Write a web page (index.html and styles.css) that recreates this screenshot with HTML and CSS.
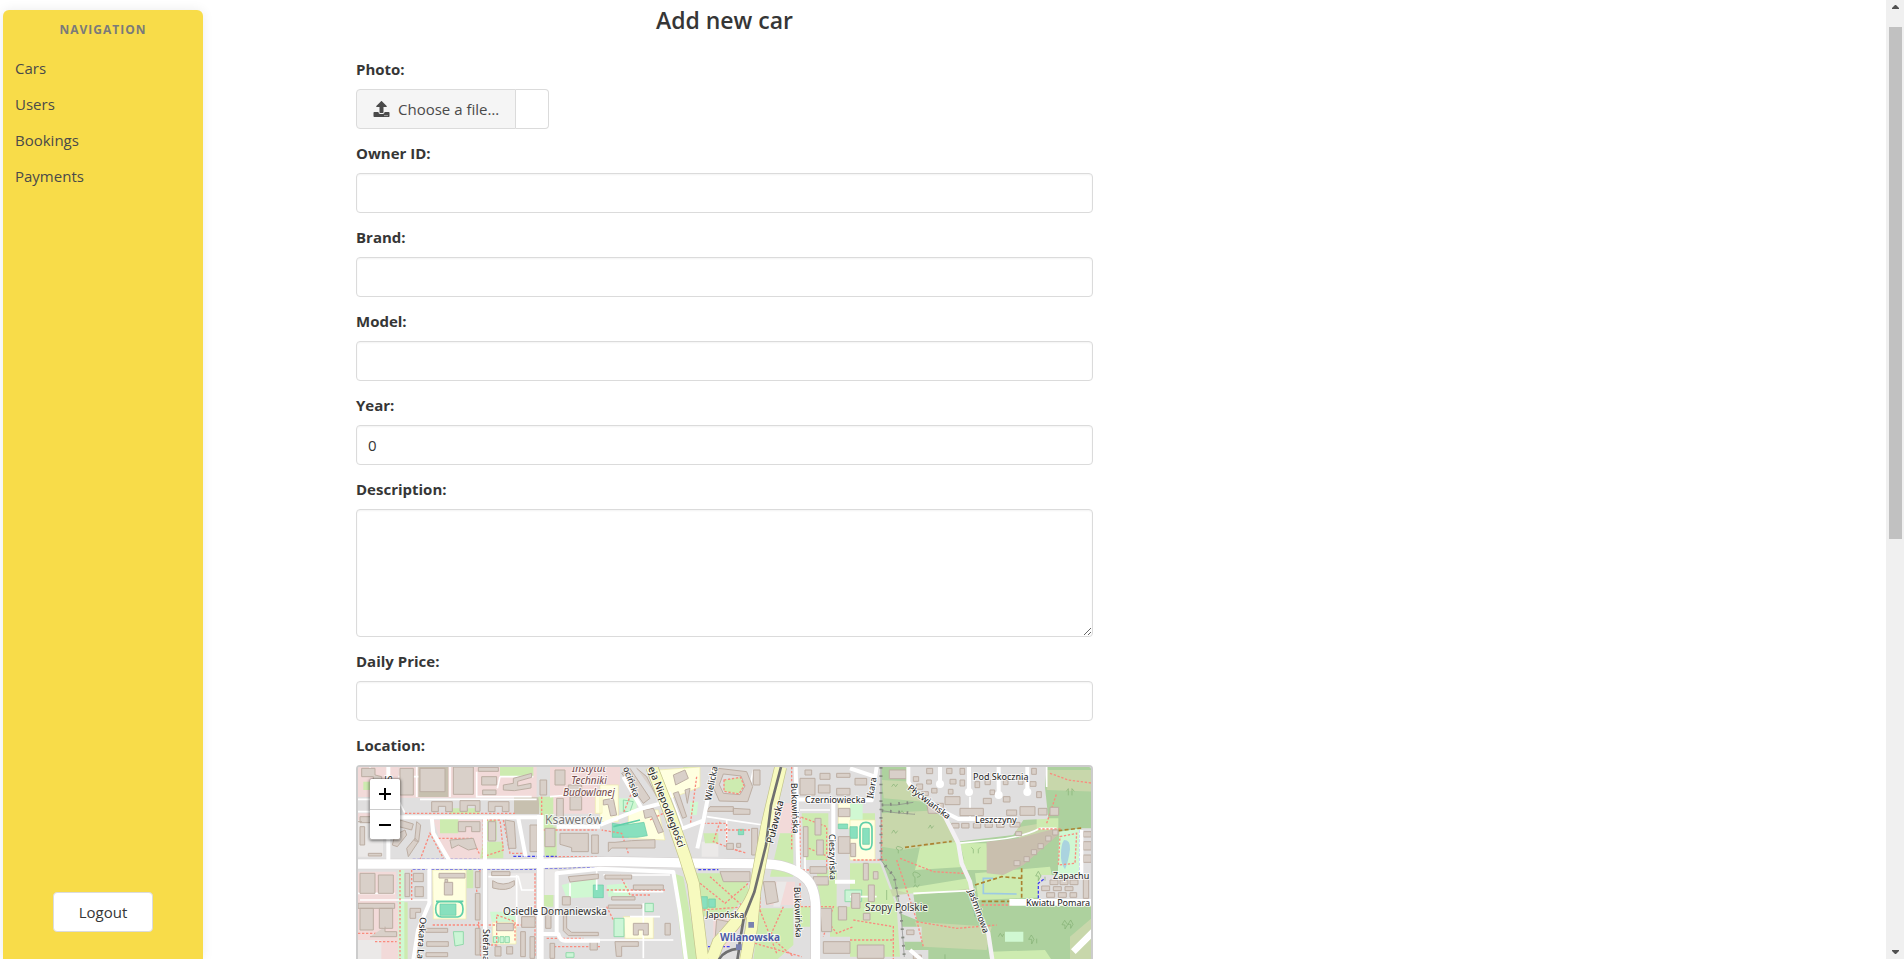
FILE: index.html
```html
<!DOCTYPE html>
<html lang="en">
<head>
<meta charset="utf-8">
<title>Add new car</title>
<link rel="stylesheet" href="styles.css">
</head>
<body>
<div class="app">
  <aside class="sidebar">
    <p class="menu-label">NAVIGATION</p>
    <nav class="menu">
      <a href="#cars">Cars</a>
      <a href="#users">Users</a>
      <a href="#bookings">Bookings</a>
      <a href="#payments">Payments</a>
    </nav>
    <button class="logout" type="button">Logout</button>
  </aside>

  <main class="content">
    <form class="car-form">
      <h1 class="title">Add new car</h1>
      <div class="field">
        <label class="label" for="photo">Photo:</label>
        <label class="file">
          <input class="file-input" id="photo" type="file">
          <span class="file-cta">
            <svg class="file-icon" viewBox="0 0 512 512" aria-hidden="true"><path d="M296 384h-80c-13.300 0-24-10.700-24-24V192h-87.700c-17.800 0-26.700-21.500-14.100-34.100L242.300 5.700c7.500-7.500 19.800-7.500 27.300 0l152.200 152.200c12.600 12.600 3.700 34.100-14.100 34.100H320v168c0 13.300-10.700 24-24 24zm216-8v112c0 13.300-10.700 24-24 24H24c-13.300 0-24-10.700-24-24V376c0-13.300 10.700-24 24-24h136v8c0 30.900 25.100 56 56 56h80c30.900 0 56-25.100 56-56v-8h136c13.300 0 24 10.700 24 24zm-124 88c0-11-9-20-20-20s-20 9-20 20 9 20 20 20 20-9 20-20zm64 0c0-11-9-20-20-20s-20 9-20 20 9 20 20 20 20-9 20-20z"/></svg>
            <span>Choose a file…</span>
          </span>
          <span class="file-name"></span>
        </label>
      </div>
      <div class="field">
        <label class="label" for="owner">Owner ID:</label>
        <input class="input" id="owner" type="text">
      </div>
      <div class="field">
        <label class="label" for="brand">Brand:</label>
        <input class="input" id="brand" type="text">
      </div>
      <div class="field">
        <label class="label" for="model">Model:</label>
        <input class="input" id="model" type="text">
      </div>
      <div class="field">
        <label class="label" for="year">Year:</label>
        <input class="input" id="year" type="text" inputmode="numeric" value="0">
      </div>
      <div class="field">
        <label class="label" for="description">Description:</label>
        <textarea class="input textarea" id="description"></textarea>
      </div>
      <div class="field">
        <label class="label" for="price">Daily Price:</label>
        <input class="input" id="price" type="text">
      </div>
      <div class="field">
        <p class="label">Location:</p>
        <div class="map">
          <svg class="map-tiles" viewBox="0 0 733 398" preserveAspectRatio="xMinYMin slice" role="img" aria-label="Map of Wilanowska">
            <g transform="scale(.33333) translate(-24 -21)">
              <!-- land use -->
              <path class="retail" d="M24 21h120v90H24zM145 21h415v92H145zM24 160h80v60H24zM24 335h115v95H24zM24 430h130v170H24zM250 180h145v120H290zM600 21h145v140H600zM750 21h60v55h-60zM1280 130h45v90h-60zM1245 365h90v70h-90zM1090 475h100l-60 90h-40z"/>
              <path class="land-light" d="M24 180h75v110H24zM24 540h70v60H24zM415 340h140v160H415zM585 330h40v75h-40zM1055 245h50v45h-50zM1280 365h30l-20 75h-20z"/>
              <path class="brown" d="M205 21h90v90h-90zM492 112h75v50h-75z"/>
              <path class="grass" d="M300 145h90v16h-90zM270 175h55v45h-55zM400 245h60v50h-70zM450 21h100v28H450zM565 110h45v100h-35zM580 200h40v90h-35zM410 180h30v60h-30zM350 325h20v60h-20zM582 405h28v35h-28zM148 427h25v170h-25zM40 65h60v25H40zM1000 21h50v60l-60 10zM1060 220h45v30h-40zM1290 220h40v130h-70zM1355 160h80v140h-70zM1030 340h150l20 60-60 60-90 10zM1230 445h100v110l-50 45h-70zM970 340l30 10 45 250h-45zM1400 330h60v120h-50zM1340 440h40v60h-40zM1440 440h60v90h-60z"/>
              <path class="park" d="M145 330h18v270h-18zM635 375l100-25 15 60-100 5zM1020 125h25l-5 40h-20zM770 375l60-5 15 40h-70zM420 455h70l10 30h-75zM805 115h55v40h-50z"/>
              <path class="school" d="M248 330h100v147h-98zM428 487h70v65h-70zM736 100h20v60h-20zM750 75h55v110h-55zM835 150h90l20 90-110-5zM925 30l125-9v60l-90 35zM820 470h90v65h-85zM1465 130h50v75h-50z"/>
              <!-- eastern fields and woods -->
              <path class="wood" d="M1595 21h635v579h-575l-60-200z"/>
              <path class="residential" d="M1500 300h95l55 150 20 150H1500z"/>
              <path class="scrub" d="M1595 160l180-10 45 95-165 25-60-10zM1596 60l95 5 30 60-120-10zM1605 390l260-25 10 25-255 20zM1695 485l230 15-15 70-190-10zM2090 30h140v65l-140-5zM1985 205l90-15 50 15-110 40zM2160 530l70-60v130h-70z"/>
              <path class="grass" d="M1710 260l110-15 30 75-155 10zM1640 390l215-35 10 30-175 20zM1830 250l80 0 5 80h-65zM1875 340l225-20 20 90-235 10zM1925 575l160-5 20 30h-180zM2060 175h65v35h-65zM1500 310h90l50 130 10 150H1500zM1510 160h65v20h-65z"/>
              <path class="residential" d="M1675 21h415l-5 60 10 95-290 15-60-70-70-50zM1790 190l230-10-30 45-170 20zM2075 345h160v72h-170v-50zM2190 205h40v210h-40zM1640 405l50-5 10 80-50-20zM1655 500h60v45h-55zM1660 570h75v30h-65z"/>
              <path class="allotment" d="M1910 245l95-10 115-30 10 15-110 95-60 30-50-5z"/>
              <path class="park" d="M2128 215l65-10v140l-70 10zM1500 130h38v50h-38zM1965 515h55v30h-55z"/>
              <path class="water" d="M2142 240q20 0 18 28-4 35-15 60-14-20-12-45 0-30 9-43z"/>
              <path class="stream" d="M1930 355h-30v45l100 2"/>
              <path class="school" d="M1500 180h75v120h-75z"/>
              <!-- sports grounds -->
              <path class="pitch" d="M270 432h48v34h-48zM787 190l35 5 60-8 10 40-30 5h-75zM1050 410h22v35h-22zM1076 417h20v25h-20zM730 375h30v38h-30zM1500 200h22v35h-22zM1538 205h20v48h-20zM1465 192h28v14h-28zM1165 208h16v16h-16z"/>
              <path class="oval" d="M275 425h48q16 0 16 22t-16 24h-48q-18 0-18-24t18-22zM258 424h82M1548 187q18 0 18 20v42q0 20-18 20t-18-20v-42q0-20 18-20zM790 200l80-20"/>
              <path class="lawn" d="M310 515h30v38l-25 5zM430 530h15v18h-15zM450 530h12v18h-12zM465 530h13v18h-13zM648 578h24v14h-24zM820 120l30 5-10 30h-20zM792 475h30v55h-30zM885 430h25v25h-25zM1485 390h50v35h-50z"/>
              <!-- minor roads -->
              <g class="lane">
                <path d="M24 118h120l20 40M24 155h80M145 50h60M200 21v90M300 21v90M380 35v75h165M450 50l-8 35M450 50h100M210 118h350M60 21v30M24 400h110M30 420h210M500 345v150M415 350h90l10 40h40M600 110l60-5M740 330v60M660 370v40M760 345h200M790 395h150M880 430v165M840 470h90M750 540h220M1070 170l100 15 70 10M1130 180v70M960 95l40 110M1210 30l-15 70M1350 150h90M1365 200v150M1500 410h80M1820 250l110-10q90-8 140-35h50M1690 400l170-8M2090 21v60M1860 110v70"/>
              </g>
              <path class="path" d="M165 160h330M580 210h160M185 330v90M150 330v270M390 330l-10 60 12 200M248 495h310M400 180v110l60-20-10-90zM460 180l20 100h50M575 110v180M590 290h155M555 340v250M410 555h30v-90l55 20v60M265 235h100l25 50M210 300l30-80 40 75M24 520h110M75 545h65M590 535h110M600 560h150M860 60l-40 100M900 180l60-30M835 280l-20-60-60-10M1020 200l20-150M1060 190h70v70l60 20M1110 185l-20 60 80 30M1325 21v250M1350 170v160h80v-130zM1365 260l70 30M1340 440h110l-30 90M1050 370l75 60 70-60M1080 350l100 90M1060 450l130-10M1230 450l50 130M1300 440l-40 90 70 60M1215 550l140 40M1350 370v70M1400 440l60 80 50-20M1650 295l100 40 90 5M1700 485l120 20 120-10M1640 300l60 180 20 80M1510 480l120 20v100M1500 540h130M2100 40l55 20 75 10M2090 190l30-90M2065 207h70M2130 230l50-10-5 90-50 5zM1895 435h90M1595 180v120M1510 300h100M1110 210h90M1230 400v60M810 345l30 60 60 0M770 390h180M770 440l20 40"/>
              <path class="foot" d="M1665 262l140-18M1875 375l80-25 60 5M2015 325v95M1895 424h85M2125 212l70-8"/>
              <path class="cycle" d="M188 298h200M490 289h130M188 327h370M585 325l165-5M1045 329h60M2190 210v120M2065 415v-45l20-15M1225 450l-10 70M1060 560h80"/>
              <!-- buildings -->
              <g class="building">
                <path d="M35 25h40v20l20 5v25H70V50H35zM150 25h40v80h-40zM210 25h75v70h-75zM310 21h60v82h-60zM385 22h60v12h-60zM395 50h45v25h-45zM398 90h40v14h-40zM460 90v-15l30-5V55l55-15v12l-42 12v14l40-8v14l-50 8zM570 60h20v45h-20zM615 30h30v45h-30zM620 115h20v60h-20zM655 75h40v18h-40zM660 110h35v40h-35z"/>
                <path d="M245 125h62v30h-20v-16h-22v16h-20zM330 122h60v32h-14v-18h-24v18h-22zM415 125h62v30h-20v-16h-22v16h-20zM30 170h35v18H30zM30 200h14v55H30zM55 280h40v8H55zM24 185h12M150 180l40 12-5 18-38-10zM135 225l30-15 5 15-28 35-15-5zM170 265l25-30 10 10-30 45zM200 185l12 10-6 50-12-3zM325 185h65v30h-25v-15h-18v15h-22zM300 240l70-5 10 30-25 5-30-15-20 10zM415 185h22v58h-22zM465 180l28 5 5 80h-22zM540 195h22v80h-22zM585 205h30v55h-30zM630 220h85v55h-50v-12l-35-10zM725 225h20v55h-20z"/>
                <path d="M30 340h45v60H30zM85 345h45v55H85zM24 430h110v15H24zM30 445h40v65H30zM88 445h40v60H88zM60 530h80v-15h-35v-15M165 340h14v70h-14zM190 340h30v25h-30zM195 380h25v30h-25zM180 445h32v12h-15v18h-17zM267 340h78v14h-78zM283 367h25v38h-25zM285 358h8v9h-8zM376 335h14v48h-14zM376 400h14v80h-14zM376 505h14v80h-14zM228 505h65v12h-65zM230 545h65v14h-65zM228 578h65v12h-65zM425 335h55v12h-55zM428 362q30 20 65 0v14q-20 20-65 8zM440 490h50v22h-50zM515 470h40v32h-40zM512 515h14v75h-14zM540 530h14v65h-14zM435 560h18v28h-18zM470 560h18v22h-18zM655 350l90-8v14l-85 10zM587 455h16v50h-16zM637 410h24v25h-24zM650 450v55l15 12h80v10h-90l-15-15v-62zM600 550h14v45h-14zM720 545h22v25h-22z"/>
                <path d="M765 345h80v12h-80zM850 375h90v14h-90zM775 435h100v10h-100zM785 410h70v10h-70zM850 490h45v35h-15v-15h-15v15h-15zM945 490h16v35h-16zM795 545h70v14h-50v30h-16zM760 120l30-5 10 50-18 3-8-35-14 2zM775 275v-28h20l50-5 70-3v25h-130zM880 150l30-5 30 70-15 5-20-50-20 5zM815 40l25-15 60 90-20 15zM860 25l30 25 30 60M970 45l35-15 10 25-38 20zM970 100l15-5 25 75-12 5zM1005 90l15-5-8 45zM1080 140h70v14h-80zM1150 145l50 3v15h-50zM1130 250h20v18h-20zM1160 250h12v12h-12zM1210 30h20v45h-20zM1205 205h18v80h-18zM1240 365h35l10 60-35 8zM1110 335h90v30h-80zM1100 478l60 12-35 60-30-10z"/>
                <path fill-rule="evenodd" d="M1105 25l85 10 18 45-15 45-85-2-20-45zM1120 42l-12 32 12 26 50 4 15-26-12-30z"/>
                <path d="M1350 55h45v50h-45zM1410 40h30v18h-30zM1460 40h40v12h-40zM1405 75h35v24h-35zM1460 85h40v20h-40zM1365 30h20v15h-20zM1515 55h35v20h-35zM1395 175h18v50h-18zM1360 200h14v90h-14zM1400 240h20v45h-20zM1380 320h50v20h-50zM1390 350h45v25h-45zM1410 445h35v70h-30zM1420 545h80v35h-80zM1465 145h35v25h-35zM1465 230h35v50h-35zM1465 440h25v40h-25zM1502 250h15v40h-15zM1540 310h15v50h-15zM1555 375h18v50h-18zM1505 400h25v45h-25zM1540 460h20v20h-20zM1522 555h80v40h-80zM1570 335h14v22h-14z"/>
                <path d="M1618 30h50v26h-50zM1690 50h16v14h-16zM1700 72h18v16h-18zM1730 25h18v16h-18zM1730 60h14v12h-14zM1715 95h20v12h-20zM1745 85h16v14h-16zM1790 25h16v16h-16zM1800 58h18v14h-18zM1795 88h14v14h-14zM1785 110h45v24h-45zM1830 25h14v18h-14zM1830 60h14v18h-14zM1875 65h14v18h-14zM1905 60h16v14h-16zM1900 115h24v16h-24zM1960 60h14v14h-14zM1920 90h14v14h-14zM1960 110h20v16h-20zM2005 55h14v18h-14zM2045 25h14v18h-14zM2040 65h18v14h-18zM2060 95h14v18h-14zM1830 145h70v22h-70zM1970 150h30v16h-30zM2010 140h45v26h-45zM2065 145h26v20h-26zM2100 142h26v24h-26zM1730 130h50v30h-45zM1805 190h22v14h-22zM1835 190h22v14h-22zM1870 190h22v14h-22zM1905 188h22v14h-22zM1940 188h22v14h-22zM1980 187h30v14h-30z"/>
                <path d="M1992 302h18v15h-18zM2022 290h16v15h-16zM2044 269h16v15h-16zM2064 251h16v15h-16zM2087 228h16v15h-16zM2108 210h16v15h-16zM1997 215h18v12h-18zM2100 360h24v14h-24zM2130 360h24v14h-24zM2160 360h24v14h-24zM2075 378h24v14h-24zM2110 380h24v12h-24zM2145 380h24v12h-24zM2090 398h24v14h-24zM2125 398h24v14h-24zM2160 398h20v14h-20zM2200 215h24v16h-24zM2200 245h24v25h-24zM2200 285h24v22h-24zM2200 355h16v60h-16zM1675 430h22v14h-22zM1670 510h22v14h-22zM1690 585h24v12h-24z"/>
              </g>
              <path class="garden" d="M1122 60l50-8 10 25-15 25-45-8z"/>
              <!-- streets -->
              <path class="casing" d="M24 312h480l270-8 230 5 250 3q80 5 120 50 25 30 23 100v140"/>
              <g class="street">
                <path d="M115 21v285M150 172h430M245 172l5 48 50 85M505 175l22 115M405 172v428M238 325v105l-34 80-14 90M620 200h130M750 195l120-48 75-20M820 50l55 95M1092 21l-32 162-18 82M1060 182l-75 28M1337 21l8 310M1345 118l220 3 15-100M1450 120v200M1455 365h60M1575 50l-75-25M1675 21v45q20 40 60 55l50 36 40 20h170"/>
                <path d="M620 525V340l130-14 220 10 20 120 18 144M570 522h55q5 20 20 20h105M1770 21v45M1857 21v72M1946 21v80M2032 21v72M2194 345V210M1680 570l35 30"/>
              </g>
              <path class="street wide" d="M571 165v435M2170 575l60-60M1978 427h250"/>
              <circle class="dot" cx="1770" cy="72" r="12"/><circle class="dot" cx="1857" cy="96" r="12"/><circle class="dot" cx="1946" cy="105" r="12"/><circle class="dot" cx="2032" cy="96" r="12"/>
              <path class="street lane-wood" d="M1780 160l45 90 10 60 25 55 15 75 40 80 12 80"/>
              <path class="artery" d="M24 312h480l270-8 230 5 250 3q80 5 120 50 25 30 23 100v140"/>
              <path class="avenue-edge" d="M905 21l55 140 45 130 25 80 28 229M1292 21l-42 180-35 190q-20 60-110 155l-20 54M1215 391l-10 110-18 99"/>
              <path class="avenue" d="M905 21l55 140 45 130 25 80 28 229M1292 21l-42 180-35 190q-20 60-110 155l-20 54M1215 391l-10 110-18 99"/>
              <path class="rail" d="M1293 21l-30 115-15 120-35 140-32 80-15 90q-45 5-60 34M1170 550l-8 50"/>
              <path class="fence" d="M1593 21v280l40 50 20 110 10 130M1595 135l45 0 50-8M1595 152l40 6 60 5"/>
              <path class="fence-ticks" d="M1593 21v280l40 50 20 110 10 130M1595 135l95-8M1595 152l100 8"/>
              <!-- trees -->
              <g class="trees">
                <path d="M1645 280v-10q-8-2-6-8t14 0-2 8M1695 370v-18q-8-4-6-12t16 0-4 12M2065 362v-14l-8 0 8-14 8 14zM2085 362v-12M2145 507v-12l-9-1 8-13 9 13zM2162 505v-12l-8 0 8-13 7 13zM2045 552v-14l-9 0 8-13 8 13zM2060 550v-14M1785 597v-14M2155 106v-20l-6 8M2166 106v-20l7 8M1875 470v-14q-12-8 0-20M1870 280v-12l-6-6M1885 280v-12l6-6M1610 420v-30"/>
                <path d="M1625 80l6-8 6 8 6-8M1735 205l6-10 4 10 6-8M1625 220l6-10 6 10 6-8M1690 382l6-8 6 8 6-8M1945 530l6-10 6 10 4-8M1650 160l6-8 6 8"/>
              </g>
              <path class="metro" d="M1195 486h17v17h-17zM1158 553h17v17h-17z"/>
            </g>
            <g class="map-labels">
              <g class="institute"><text x="231" y="5">Instytut</text><text x="231" y="17">Techniki</text><text x="231" y="29">Budowlanej</text></g>
              <text class="suburb" x="187" y="57">Ksawerów</text>
              <text class="place" x="145" y="148">Osiedle Domaniewska</text>
              <text class="place" x="507" y="144">Szopy Polskie</text>
              <text class="station" x="392" y="174">Wilanowska</text>
              <text class="road" text-anchor="middle" transform="translate(27 11) rotate(90)">S</text>
              <text class="road" transform="translate(62 150) rotate(94)">Oskara Lan</text>
              <text class="road" transform="translate(125 162) rotate(90)">Stefana</text>
              <text class="road" transform="translate(265 1) rotate(70)">ocińska</text>
              <text class="road main" transform="translate(290 1) rotate(69)">eja Niepodległości</text>
              <text class="road" transform="translate(353 34) rotate(-79)">Wielicka</text>
              <text class="road main" transform="translate(415 77) rotate(-76)">Puławska</text>
              <text class="road" transform="translate(433 16) rotate(88)">Bukowińska</text>
              <text class="road" transform="translate(436 120) rotate(88)">Bukowińska</text>
              <text class="road" transform="translate(471 67) rotate(89)">Cieszyńska</text>
              <text class="road" x="447" y="36">Czerniowiecka</text>
              <text class="road" x="348" y="151">Japońska</text>
              <text class="road" transform="translate(515 32) rotate(-80)">Ikara</text>
              <text class="road" transform="translate(549 22) rotate(37)">Płyćwiańska</text>
              <text class="road" x="615" y="13">Pod Skocznią</text>
              <text class="road" x="617" y="56">Leszczyny</text>
              <text class="road" x="695" y="112">Zapachu</text>
              <text class="road" x="668" y="139">Kwiatu Pomara</text>
              <text class="road" transform="translate(610 124) rotate(70)">Jaśminowa</text>
            </g>
          </svg>
          <div class="zoom">
            <button type="button" aria-label="Zoom in"><svg viewBox="0 0 12 12"><path d="M6 0v12M0 6h12"/></svg></button>
            <button type="button" aria-label="Zoom out"><svg viewBox="0 0 12 12"><path d="M0 6h12"/></svg></button>
          </div>
        </div>
      </div>
    </form>
  </main>

  <div class="scrollbar" aria-hidden="true">
    <svg viewBox="0 0 7 4"><path d="M0 4v-1l3-3h1l3 3v1z"/></svg>
    <div class="scroll-track"><div class="thumb"></div></div>
    <svg viewBox="0 0 7 4"><path d="M0 0v1l3 3h1l3-3v-1z"/></svg>
  </div>
</div>
</body>
</html>
```
FILE: styles.css
```css
* { box-sizing: border-box; }

body {
  margin: 0;
  color: #363636;
  background: #fff;
  font-family: "Open Sans", "Noto Sans", sans-serif;
  font-size: 15px;
  line-height: 24px;
}

button, input, textarea { font: inherit; color: inherit; }

.app {
  display: grid;
  grid-template-columns: 200px minmax(0, 1fr) 18px;
  grid-template-rows: minmax(0, 1fr);
  height: 100vh;
  padding-left: 3px;
  overflow: hidden;
}

.sidebar {
  display: flex;
  flex-direction: column;
  margin-top: 10px;
  padding: 11px 0 27px;
  background: #f8dc49;
  border-radius: 6px 6px 0 0;
  box-shadow: 0 0 12px rgba(10, 10, 10, .08);
}

.menu-label {
  margin: 0 0 11px;
  color: #7a7a7a;
  font-size: 12px;
  font-weight: 700;
  line-height: 18px;
  letter-spacing: 1px;
  text-align: center;
}

.menu a {
  display: block;
  padding: 8px 12px;
  color: #4a4a4a;
  line-height: 20px;
  text-decoration: none;
}

.logout {
  align-self: center;
  width: 100px;
  height: 40px;
  margin-top: auto;
  background: #fff;
  border: 1px solid #dbdbdb;
  border-radius: 4px;
}

.content {
  display: grid;
  grid-template-columns: 153fr 737fr 793fr;
  align-items: start;
  min-width: 0;
  overflow: hidden;
}

.car-form {
  grid-column: 2;
  display: flex;
  flex-direction: column;
  gap: 12px;
  min-width: 0;
}

.title {
  margin: 5px 0 10px;
  font-size: 23px;
  font-weight: 600;
  line-height: 30px;
  text-align: center;
}

.field { display: flex; flex-direction: column; }

.label {
  margin: 0 0 8px;
  font-size: 15px;
  font-weight: 700;
}

.input {
  width: 100%;
  height: 40px;
  padding: 7px 11px;
  background: #fff;
  border: 1px solid #dbdbdb;
  border-radius: 4px;
  box-shadow: inset 0 1px 2px rgba(10, 10, 10, .05);
}

.textarea { display: block; height: 128px; resize: vertical; }

.file { display: flex; align-self: flex-start; height: 40px; }
.file-input {
  position: absolute;
  width: 1px;
  height: 1px;
  opacity: 0;
}
.file-cta {
  display: flex;
  align-items: center;
  gap: 8px;
  padding: 0 16px;
  color: #4a4a4a;
  background: #f5f5f5;
  border: 1px solid #dbdbdb;
  border-radius: 4px 0 0 4px;
}
.file-icon { width: 17px; height: 16px; fill: currentColor; }
.file-name {
  width: 33px;
  border: 1px solid #dbdbdb;
  border-left: 0;
  border-radius: 0 4px 4px 0;
}

.map {
  position: relative;
  height: 402px;
  overflow: hidden;
  border: 2px solid #ccc;
  border-radius: 4px;
}
.map-tiles { display: block; width: 100%; height: 100%; background: #e0dfdf; }

.zoom {
  position: absolute;
  top: 11px;
  left: 11px;
  overflow: hidden;
  border: 1px solid rgba(0, 0, 0, .25);
  border-radius: 3px;
  box-shadow: 0 1px 3px rgba(0, 0, 0, .5);
}
.zoom button {
  display: grid;
  place-items: center;
  width: 30px;
  height: 30px;
  padding: 0;
  background: #fff;
  border: 0;
}
.zoom button + button { border-top: 1px solid #ccc; }
.zoom svg { width: 12px; height: 12px; fill: none; stroke: #000; stroke-width: 2; }

.residential { fill: #e0dfdf; }
.retail { fill: #f2dad9; }
.land-light { fill: #ebe9e8; }
.brown { fill: #c7c0af; }
.allotment { fill: #c9bfae; }
.grass { fill: #cdebb0; }
.park { fill: #d0f8d2; }
.school { fill: #ffffe0; stroke: #f0ebaa; stroke-width: 2; }
.wood { fill: #add19e; }
.scrub { fill: #c8d7ab; }
.water { fill: #aad3df; }
.stream { fill: none; stroke: #9cc9e4; stroke-width: 5; }
.pitch { fill: #88e0be; stroke: #67caa4; stroke-width: 2; }
.oval { fill: none; stroke: #5fcfa9; stroke-width: 5; }
.lawn { fill: #ccf5d6; stroke: #92d9ab; stroke-width: 3; }
.garden { fill: #cdebb0; stroke: #fa8b7e; stroke-width: 4; stroke-dasharray: 7 5; }
.building { fill: #d9d0c9; stroke: #bcaea3; stroke-width: 3; }
.lane { fill: none; stroke: #fff; stroke-width: 5; }
.path { fill: none; stroke: #fa8b7e; stroke-width: 4; stroke-dasharray: 7 5; }
.foot { fill: none; stroke: #ac8331; stroke-width: 5; stroke-dasharray: 12 7; }
.cycle { fill: none; stroke: #4242f0; stroke-width: 4; stroke-dasharray: 9 5; }
.street { fill: none; stroke: #fff; stroke-width: 12; stroke-linejoin: round; }
.wide { stroke-width: 20; }
.lane-wood { stroke: #f4f1f4; stroke-width: 13; }
.dot { fill: #fff; }
.casing { fill: none; stroke: #d4d0d0; stroke-width: 32; }
.artery { fill: none; stroke: #fff; stroke-width: 28; }
.avenue-edge { fill: none; stroke: #c3c48c; stroke-width: 38; }
.avenue { fill: none; stroke: #f7fabf; stroke-width: 34; }
.rail { fill: none; stroke: #707070; stroke-width: 8; }
.fence { fill: none; stroke: #888; stroke-width: 2; }
.fence-ticks { fill: none; stroke: #858a80; stroke-width: 9; stroke-dasharray: 5 20; }
.trees { fill: none; stroke: #83b174; stroke-width: 2; }
.metro { fill: #7981b0; }

.map-labels {
  font-family: "Noto Sans", sans-serif;
  font-size: 9px;
  fill: #222;
  stroke: rgba(255, 255, 255, .7);
  stroke-width: 2px;
  paint-order: stroke;
}
.map-labels .main { font-size: 10px; }
.institute { font-style: italic; font-size: 10px; fill: #734a4a; text-anchor: middle; }
.place { font-size: 10px; fill: #333; }
.suburb { font-size: 12px; fill: #777; }
.station { font-size: 10px; font-weight: 700; fill: #4c5aa8; text-anchor: middle; }

.scrollbar {
  display: flex;
  flex-direction: column;
  align-items: center;
  gap: 8px;
  padding: 5px 0;
  background: #f0f0f0;
}
.scrollbar svg { flex: none; width: 7px; height: 4px; fill: #505050; }
.scroll-track { flex: 1; width: 13px; padding-top: 10px; }
.thumb { height: 56%; background: #c1c1c1; }
```
